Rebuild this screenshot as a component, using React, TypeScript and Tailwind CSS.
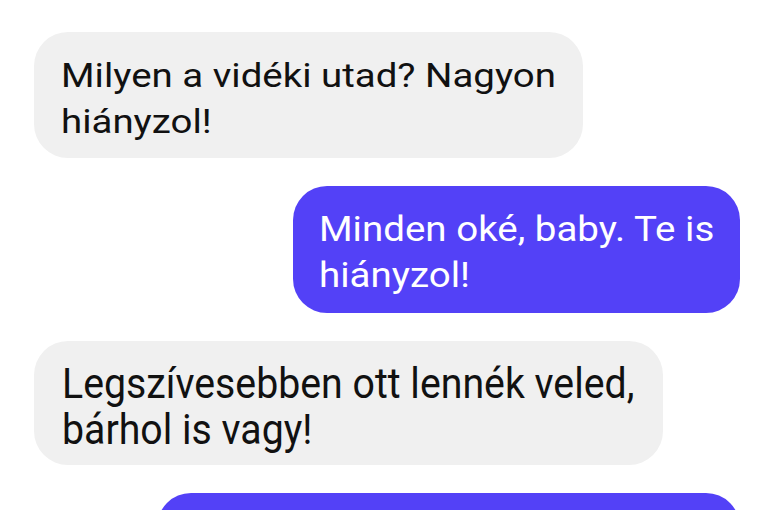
import React from "react";

export default function App() {
  return (
    <div
      className="w-[768px] h-[510px] overflow-hidden bg-white flex flex-col pt-[32px] gap-[28px]"
      style={{ fontFamily: "Roboto, 'Noto Sans', sans-serif" }}
    >
      <div className="ml-[34px] w-[549px] h-[126px] shrink-0 rounded-[34px] bg-[#f0f0f0] pl-[27px] pt-[20px] text-[34px] leading-[46px] text-[#111]">
        <span className="inline-block origin-left scale-x-[1.13] whitespace-nowrap">
          Milyen a vidéki utad? Nagyon
          <br />
          hiányzol!
        </span>
      </div>
      <div className="ml-[293px] w-[447px] h-[127px] shrink-0 rounded-[34px] bg-[#5341f7] pl-[26px] pt-[21px] text-[35px] leading-[46px] text-white">
        <span className="inline-block origin-left scale-x-[1.1] whitespace-nowrap">
          Minden oké, baby. Te is
          <br />
          hiányzol!
        </span>
      </div>
      <div className="ml-[34px] w-[629px] h-[124px] shrink-0 rounded-[34px] bg-[#f0f0f0] pl-[28px] pt-[20px] text-[42px] leading-[46px] text-[#111]">
        <span className="inline-block origin-left scale-x-[0.935] whitespace-nowrap">
          Legszívesebben ott lennék veled,
          <br />
          bárhol is vagy!
        </span>
      </div>
      <div className="ml-[157px] w-[583px] h-[126px] shrink-0 rounded-[34px] bg-[#5341f7]" />
    </div>
  );
}
